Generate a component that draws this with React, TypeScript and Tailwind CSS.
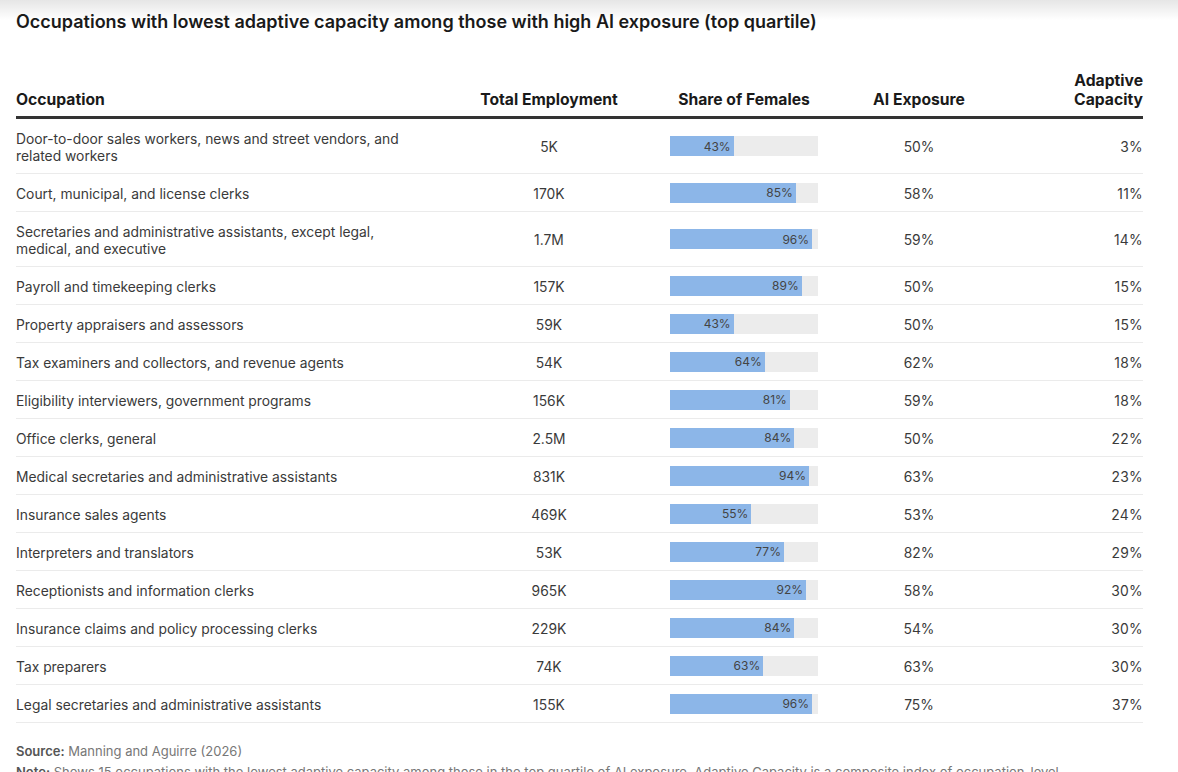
import React from 'react';

type Row = {
  occupation: string;
  employment: string;
  female: number;
  ai: string;
  capacity: string;
};

const rows: Row[] = [
  { occupation: 'Door-to-door sales workers, news and street vendors, and related workers', employment: '5K', female: 43, ai: '50%', capacity: '3%' },
  { occupation: 'Court, municipal, and license clerks', employment: '170K', female: 85, ai: '58%', capacity: '11%' },
  { occupation: 'Secretaries and administrative assistants, except legal, medical, and executive', employment: '1.7M', female: 96, ai: '59%', capacity: '14%' },
  { occupation: 'Payroll and timekeeping clerks', employment: '157K', female: 89, ai: '50%', capacity: '15%' },
  { occupation: 'Property appraisers and assessors', employment: '59K', female: 43, ai: '50%', capacity: '15%' },
  { occupation: 'Tax examiners and collectors, and revenue agents', employment: '54K', female: 64, ai: '62%', capacity: '18%' },
  { occupation: 'Eligibility interviewers, government programs', employment: '156K', female: 81, ai: '59%', capacity: '18%' },
  { occupation: 'Office clerks, general', employment: '2.5M', female: 84, ai: '50%', capacity: '22%' },
  { occupation: 'Medical secretaries and administrative assistants', employment: '831K', female: 94, ai: '63%', capacity: '23%' },
  { occupation: 'Insurance sales agents', employment: '469K', female: 55, ai: '53%', capacity: '24%' },
  { occupation: 'Interpreters and translators', employment: '53K', female: 77, ai: '82%', capacity: '29%' },
  { occupation: 'Receptionists and information clerks', employment: '965K', female: 92, ai: '58%', capacity: '30%' },
  { occupation: 'Insurance claims and policy processing clerks', employment: '229K', female: 84, ai: '54%', capacity: '30%' },
  { occupation: 'Tax preparers', employment: '74K', female: 63, ai: '63%', capacity: '30%' },
  { occupation: 'Legal secretaries and administrative assistants', employment: '155K', female: 96, ai: '75%', capacity: '37%' },
];

const grid = 'grid grid-cols-[454px_158px_232px_118px_165px]';

function FemaleBar({ value }: { value: number }) {
  return (
    <div className="w-[148px] h-5 bg-[#ececec]">
      <div
        className="h-full bg-[#8cb6e8] flex items-center justify-end pr-[3px] text-[12px] text-[#444]"
        style={{ width: `${value}%` }}
      >
        {value}%
      </div>
    </div>
  );
}

export default function App() {
  return (
    <div className="h-[772px] overflow-hidden bg-white font-['Inter',sans-serif] text-[#333]">
      <div className="h-5 bg-gradient-to-b from-[#e6e6e6] to-white" />
      <div className="px-4">
        <h1 className="-mt-[10px] text-[18px] font-semibold text-[#1a1a1a] leading-6">
          Occupations with lowest adaptive capacity among those with high AI exposure (top quartile)
        </h1>

        <div className="mt-[37px] w-[1127px]">
          <div className={`${grid} items-end border-b-[3px] border-[#333] pb-[7px] text-[15.7px] font-bold text-[#1a1a1a] leading-[19px]`}>
            <div>Occupation</div>
            <div className="text-center">Total Employment</div>
            <div className="text-center">Share of Females</div>
            <div className="text-center">AI Exposure</div>
            <div className="text-right">
              Adaptive
              <br />
              Capacity
            </div>
          </div>

          {rows.map((r) => (
            <div
              key={r.occupation}
              className={`${grid} items-center border-b border-[#ebebeb] text-[13.85px] leading-[17px] text-[#3a3a3a] ${
                r.occupation.length > 60 ? 'h-[55px]' : 'h-[38px]'
              }`}
            >
              <div className="pr-[50px] pt-1">{r.occupation}</div>
              <div className="text-center pt-[3px]">{r.employment}</div>
              <div className="flex justify-center">
                <FemaleBar value={r.female} />
              </div>
              <div className="text-center pt-[3px]">{r.ai}</div>
              <div className="text-right tracking-[0.3px] pt-[3px]">{r.capacity}</div>
            </div>
          ))}
        </div>

        <div className="mt-[19px] text-[13px] leading-[18px] text-[#777]">
          <span className="font-semibold text-[#555]">Source:</span> Manning and Aguirre (2026)
        </div>
        <div className="mt-[3px] text-[13px] leading-[18px] text-[#777] whitespace-nowrap">
          <span className="font-semibold text-[#555]">Note:</span> Shows 15 occupations with the lowest adaptive capacity among those in the top quartile of AI exposure. Adaptive Capacity is a composite index of occupation-level
        </div>
      </div>
    </div>
  );
}
